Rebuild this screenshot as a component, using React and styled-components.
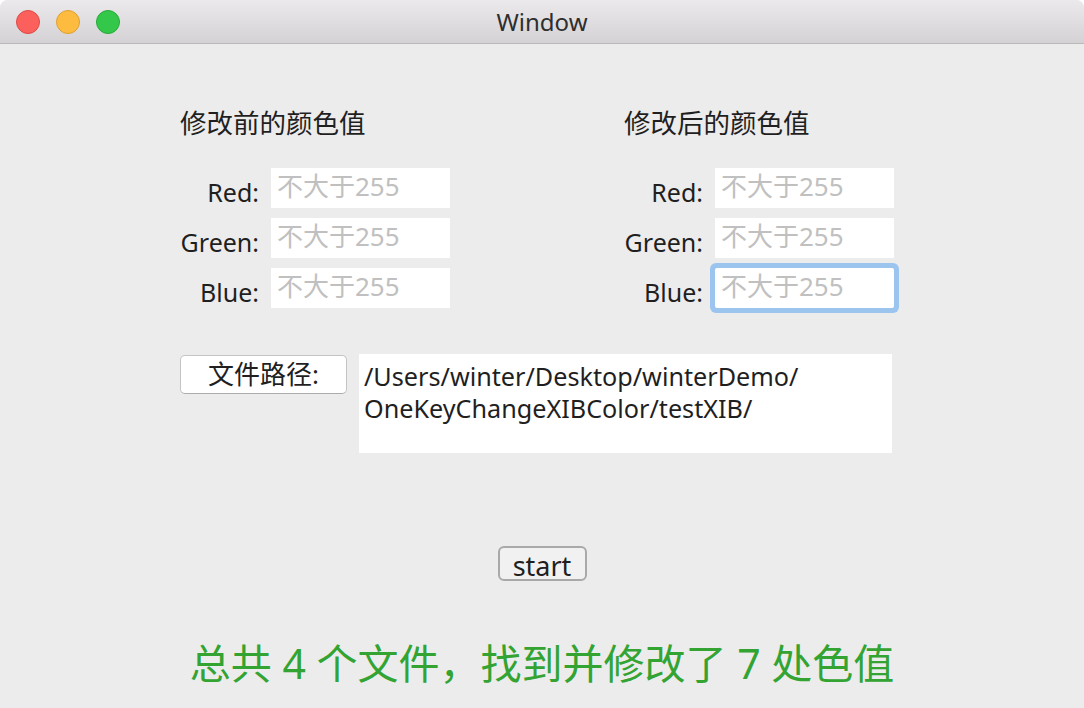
import React from "react";
import styled, { createGlobalStyle } from "styled-components";

const Global = createGlobalStyle`
  html, body {
    margin: 0;
    padding: 0;
    background: #ffffff;
  }
  body {
    font-family: "Noto Sans", "Noto Sans CJK SC", sans-serif;
  }
`;

const Window = styled.div`
  width: 1084px;
  height: 708px;
  background: #ececec;
  border-radius: 8px 8px 0 0;
  overflow: hidden;
  display: flex;
  flex-direction: column;
`;

const TitleBar = styled.div`
  height: 43px;
  border-bottom: 1px solid #b9b9b9;
  background: linear-gradient(#ebe9eb, #d4d2d4);
  display: flex;
  align-items: center;
  position: relative;
`;

const Lights = styled.div`
  display: flex;
  gap: 16px;
  padding-left: 16px;
`;

const Light = styled.span`
  width: 24px;
  height: 24px;
  border-radius: 50%;
  box-sizing: border-box;
  background: ${(p) => p.color};
  border: 1px solid ${(p) => p.edge};
`;

const Title = styled.div`
  position: absolute;
  left: 0;
  right: 0;
  text-align: center;
  font-size: 24px;
  line-height: 43px;
  color: #2e2e2e;
  pointer-events: none;
`;

const Content = styled.div`
  flex: 1;
  display: flex;
  flex-direction: column;
  padding: 63px 0 0 180px;
`;

const Columns = styled.div`
  display: grid;
  grid-template-columns: 444px 290px;
`;

const Column = styled.div`
  display: flex;
  flex-direction: column;
`;

const Heading = styled.div`
  font-size: 26.5px;
  line-height: 32px;
  color: #1f1f1f;
  margin-bottom: 29px;
`;

const Rows = styled.div`
  display: flex;
  flex-direction: column;
  gap: 10px;
`;

const Row = styled.div`
  display: flex;
  gap: 12px;
`;

const Label = styled.div`
  width: 79px;
  text-align: right;
  font-size: 25px;
  line-height: 30px;
  padding-top: 9px;
  color: #1f1f1f;
  white-space: nowrap;
`;

const Field = styled.div`
  width: 179px;
  height: 40px;
  box-sizing: border-box;
  background: #ffffff;
  padding-left: 6px;
  font-size: 26px;
  line-height: 37px;
  color: #c0c0c0;
  border-radius: ${(p) => (p.focused ? "2px" : "0")};
  box-shadow: ${(p) => (p.focused ? "0 0 0 5px #9bc5ef" : "none")};
  white-space: nowrap;
  overflow: hidden;
`;

const PathRow = styled.div`
  display: flex;
  align-items: flex-start;
  gap: 12px;
  margin-top: 46px;
`;

const PathButton = styled.div`
  margin-top: 1px;
  width: 167px;
  height: 39px;
  box-sizing: border-box;
  background: #ffffff;
  border: 1px solid #c4c4c4;
  border-bottom-color: #acacac;
  border-radius: 5px;
  font-size: 26px;
  line-height: 36px;
  text-align: center;
  color: #1f1f1f;
`;

const PathBox = styled.div`
  width: 533px;
  height: 99px;
  box-sizing: border-box;
  background: #ffffff;
  padding: 6px 5px;
  font-size: 25.2px;
  line-height: 32px;
  color: #1f1f1f;
  white-space: nowrap;
`;

const Footer = styled.div`
  display: flex;
  flex-direction: column;
  align-items: center;
  margin-left: -180px;
`;

const StartButton = styled.div`
  margin-top: 93px;
  width: 89px;
  height: 35px;
  box-sizing: border-box;
  border: 2px solid #a9a9a9;
  border-radius: 6px;
  background: #f1f1f1;
  font-size: 27px;
  line-height: 35px;
  text-align: center;
  color: #1f1f1f;
`;

const Result = styled.div`
  margin-top: 57px;
  font-size: 41px;
  line-height: 50px;
  color: #33a332;
  white-space: pre;
`;

const fields = ["Red:", "Green:", "Blue:"];

function ColorGroup({ title, focusLast }) {
  return (
    <Column>
      <Heading>{title}</Heading>
      <Rows>
        {fields.map((f, i) => (
          <Row key={f}>
            <Label>{f}</Label>
            <Field focused={focusLast && i === fields.length - 1}>不大于255</Field>
          </Row>
        ))}
      </Rows>
    </Column>
  );
}

export default function App() {
  return (
    <>
      <Global />
      <Window>
        <TitleBar>
          <Lights>
            <Light color="#fc605c" edge="#de4a46" />
            <Light color="#fdbc40" edge="#dea032" />
            <Light color="#34c84a" edge="#27aa37" />
          </Lights>
          <Title>Window</Title>
        </TitleBar>
        <Content>
          <Columns>
            <ColorGroup title="修改前的颜色值" />
            <ColorGroup title="修改后的颜色值" focusLast />
          </Columns>
          <PathRow>
            <PathButton>文件路径:</PathButton>
            <PathBox>
              /Users/winter/Desktop/winterDemo/
              <br />
              OneKeyChangeXIBColor/testXIB/
            </PathBox>
          </PathRow>
          <Footer>
            <StartButton>start</StartButton>
            <Result>总共 4 个文件，找到并修改了 7 处色值</Result>
          </Footer>
        </Content>
      </Window>
    </>
  );
}
